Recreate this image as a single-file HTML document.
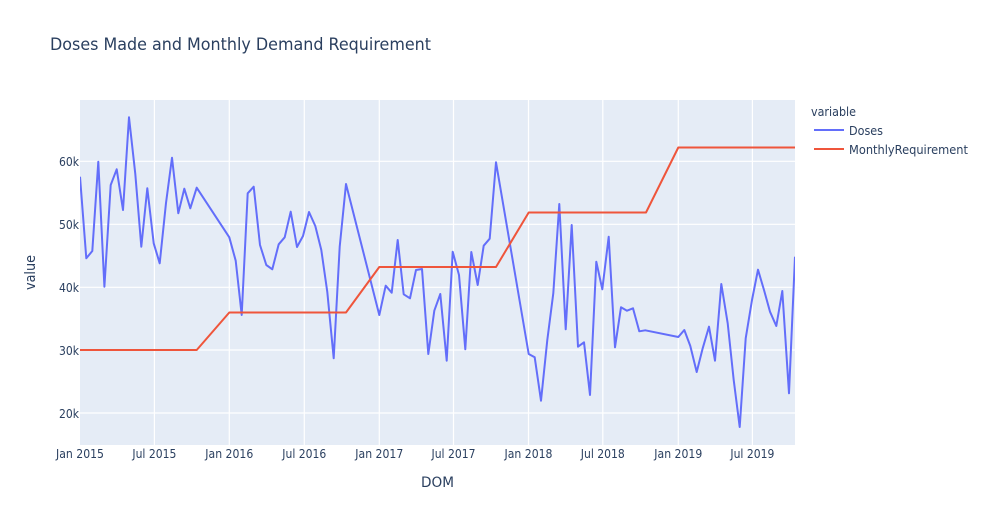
<!DOCTYPE html>
<html>
<head>
<meta charset="utf-8">
<style>
html,body{margin:0;padding:0;background:#fff;width:985px;height:525px;overflow:hidden}
svg{display:block}
text{font-family:"DejaVu Sans","Liberation Sans",sans-serif;fill:#2a3f5f;font-size:12px}
.g{stroke:#fff;stroke-width:1.2;fill:none}
.l{fill:none;stroke-width:2;stroke-linejoin:round}
</style>
</head>
<body>
<svg width="985" height="525" viewBox="0 0 985 525" xmlns="http://www.w3.org/2000/svg">
<defs><clipPath id="c"><rect x="80" y="100" width="715" height="345"/></clipPath></defs>
<rect x="80" y="100" width="715" height="345" fill="#E5ECF6"/>
<path class="g" d="M154.4 100V445M229.3 100V445M304.3 100V445M379.3 100V445M453.5 100V445M528.5 100V445M602.8 100V445M678.3 100V445M752.4 100V445M80 161.3H795M80 224.3H795M80 287.3H795M80 350H795M80 413H795"/>
<g clip-path="url(#c)">
<polyline class="l" stroke="#636efa" points="80,176.7 86.3,258.3 92.3,251 98.3,161.7 104.4,286.7 110.7,185 116.7,169.3 123,210 129,117.3 135.3,174 141.3,246.7 147.3,188.3 153.7,243.3 159.7,263.3 166,203 172,157.7 178.3,213.3 184.3,188.7 190.3,208.3 196.7,187.7 229.3,237.3 235.7,260.7 241.7,315 247.7,193.3 253.7,186.7 260,245 266.3,265 272.3,269.3 278.7,244.3 284.7,237.3 290.7,211.7 297,247 303,236 309,212 315.3,226 321.3,250 327.3,292 333.7,358.3 339.7,246.7 346,184 379.3,315 385.7,285.7 391.7,292.7 397.7,240 403.7,294.3 410,298.3 416,270 422,269 428.3,354 434.3,310.7 440.3,294 446.7,360.7 452.7,251.7 459,275 465.3,349.3 471.3,252 477.7,285 483.7,245.7 489.7,238.7 496,162.3 528.7,354 534.7,357.3 541,400.7 547.3,340 553.3,293.3 559.3,204 565.7,329.3 571.7,225 578,346.7 584,342.3 590,395 596.3,261.7 602.3,289.3 608.7,236.7 615,347.3 621,307.3 627,310.7 633,308.3 639.3,331.3 645.3,330.3 678.3,337 684.3,330 690.3,346 696.7,372 702.7,348.3 709,326.7 715,360.7 721.3,284 727.7,323.3 733.7,380 739.7,427 745.7,338.3 752,300 758,269.7 764,290 770,311.7 776.3,326 782.3,291 789,393.3 795,256.7"/>
<polyline class="l" stroke="#EF553B" points="80,350 196.7,350 229.3,312.5 346,312.5 379.3,267 496,267 528.7,212.5 646,212.5 678.3,147.5 795,147.5"/>
</g>
<text x="50" y="50" style="font-size:17px" textLength="381" lengthAdjust="spacingAndGlyphs">Doses Made and Monthly Demand Requirement</text>
<g text-anchor="end">
<text x="79" y="166" textLength="20" lengthAdjust="spacingAndGlyphs">60k</text>
<text x="79" y="229" textLength="20" lengthAdjust="spacingAndGlyphs">50k</text>
<text x="79" y="292" textLength="20" lengthAdjust="spacingAndGlyphs">40k</text>
<text x="79" y="355" textLength="20" lengthAdjust="spacingAndGlyphs">30k</text>
<text x="79" y="418" textLength="20" lengthAdjust="spacingAndGlyphs">20k</text>
</g>
<g text-anchor="middle">
<text x="80" y="458" textLength="48" lengthAdjust="spacingAndGlyphs">Jan 2015</text>
<text x="154.4" y="458" textLength="44" lengthAdjust="spacingAndGlyphs">Jul 2015</text>
<text x="229.3" y="458" textLength="48" lengthAdjust="spacingAndGlyphs">Jan 2016</text>
<text x="304.3" y="458" textLength="44" lengthAdjust="spacingAndGlyphs">Jul 2016</text>
<text x="379.3" y="458" textLength="48" lengthAdjust="spacingAndGlyphs">Jan 2017</text>
<text x="453.5" y="458" textLength="44" lengthAdjust="spacingAndGlyphs">Jul 2017</text>
<text x="528.5" y="458" textLength="48" lengthAdjust="spacingAndGlyphs">Jan 2018</text>
<text x="602.8" y="458" textLength="44" lengthAdjust="spacingAndGlyphs">Jul 2018</text>
<text x="678.3" y="458" textLength="48" lengthAdjust="spacingAndGlyphs">Jan 2019</text>
<text x="752.4" y="458" textLength="44" lengthAdjust="spacingAndGlyphs">Jul 2019</text>
</g>
<text x="421" y="487" style="font-size:14px" textLength="33" lengthAdjust="spacingAndGlyphs">DOM</text>
<text transform="translate(35 290) rotate(-90)" style="font-size:14px" textLength="35" lengthAdjust="spacingAndGlyphs">value</text>
<text x="811" y="116" textLength="45" lengthAdjust="spacingAndGlyphs">variable</text>
<path d="M814 130H844" stroke="#636efa" stroke-width="2" fill="none"/>
<text x="849" y="135" textLength="34" lengthAdjust="spacingAndGlyphs">Doses</text>
<path d="M814 149H844" stroke="#EF553B" stroke-width="2" fill="none"/>
<text x="849" y="154" textLength="119" lengthAdjust="spacingAndGlyphs">MonthlyRequirement</text>
</svg>
</body>
</html>
